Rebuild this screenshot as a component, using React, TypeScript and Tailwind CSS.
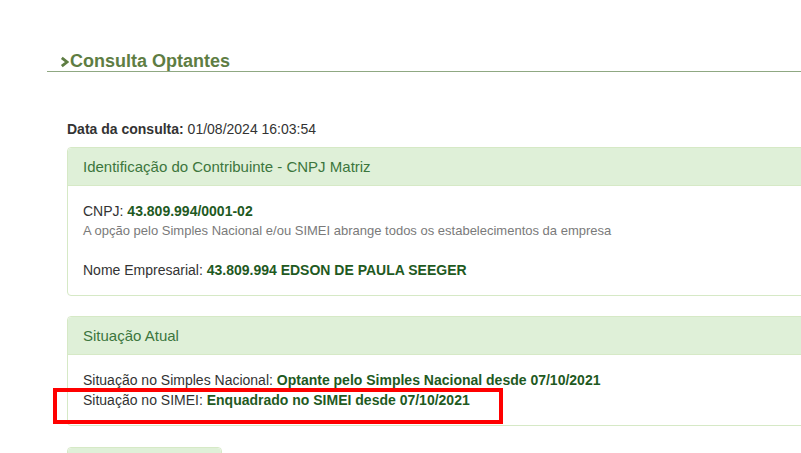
const panelHeader =
  "rounded-t-[4px] border-b border-[#d6e9c6] bg-[#dff0d8] px-[15px] py-[10px] text-[15px] leading-[17px] text-[#3c763d]";

function Value({ children }: { children: React.ReactNode }) {
  return <strong className="font-bold text-[#1f5a1f]">{children}</strong>;
}

export default function App() {
  return (
    <div
      className="relative h-[453px] w-[801px] overflow-hidden bg-white text-[14px] leading-[20px] text-[#333]"
      style={{ fontFamily: '"Liberation Sans", Arial, sans-serif' }}
    >
      <div className="pl-[47px] pt-[51px]">
        <h2 className="flex items-center gap-[1px] border-b border-[#8fa882] pl-[13px] text-[18px] font-bold leading-[20px] text-[#5e7d43]">
          <svg width="9" height="12" viewBox="0 0 9 12" className="mt-[2px]">
            <path d="M1.8 1.8 L7 6 L1.8 10.2" fill="none" stroke="currentColor" strokeWidth="2.8" />
          </svg>
          Consulta Optantes
        </h2>
      </div>

      <div className="pl-[67px] pt-[47px]">
        <p>
          <strong className="font-bold">Data da consulta:</strong> 01/08/2024 16:03:54
        </p>

        <section className="mt-[8px] w-[780px] rounded-[4px] border border-[#d6e9c6] bg-white">
          <div className={panelHeader}>Identificação do Contribuinte - CNPJ Matriz</div>
          <div className="px-[15px] py-[15px]">
            <p>
              CNPJ: <Value>43.809.994/0001-02</Value>
            </p>
            <p className="text-[13px] text-[#7a7a7a]">
              A opção pelo Simples Nacional e/ou SIMEI abrange todos os estabelecimentos da empresa
            </p>
            <p className="mt-[19px]">
              Nome Empresarial: <Value>43.809.994 EDSON DE PAULA SEEGER</Value>
            </p>
          </div>
        </section>

        <section className="mt-[20px] w-[780px] rounded-[4px] border border-[#d6e9c6] bg-white">
          <div className={panelHeader}>Situação Atual</div>
          <div className="px-[15px] py-[15px]">
            <p>
              Situação no Simples Nacional: <Value>Optante pelo Simples Nacional desde 07/10/2021</Value>
            </p>
            <p>
              Situação no SIMEI: <Value>Enquadrado no SIMEI desde 07/10/2021</Value>
            </p>
          </div>
        </section>

        <section className="mt-[21px] w-[155px] rounded-[4px] border border-[#d6e9c6] bg-white">
          <div className={panelHeader}>&nbsp;</div>
        </section>
      </div>

      <div className="absolute left-[53px] top-[388px] h-[36px] w-[450px] border-[4px] border-[#f00]" />
    </div>
  );
}
